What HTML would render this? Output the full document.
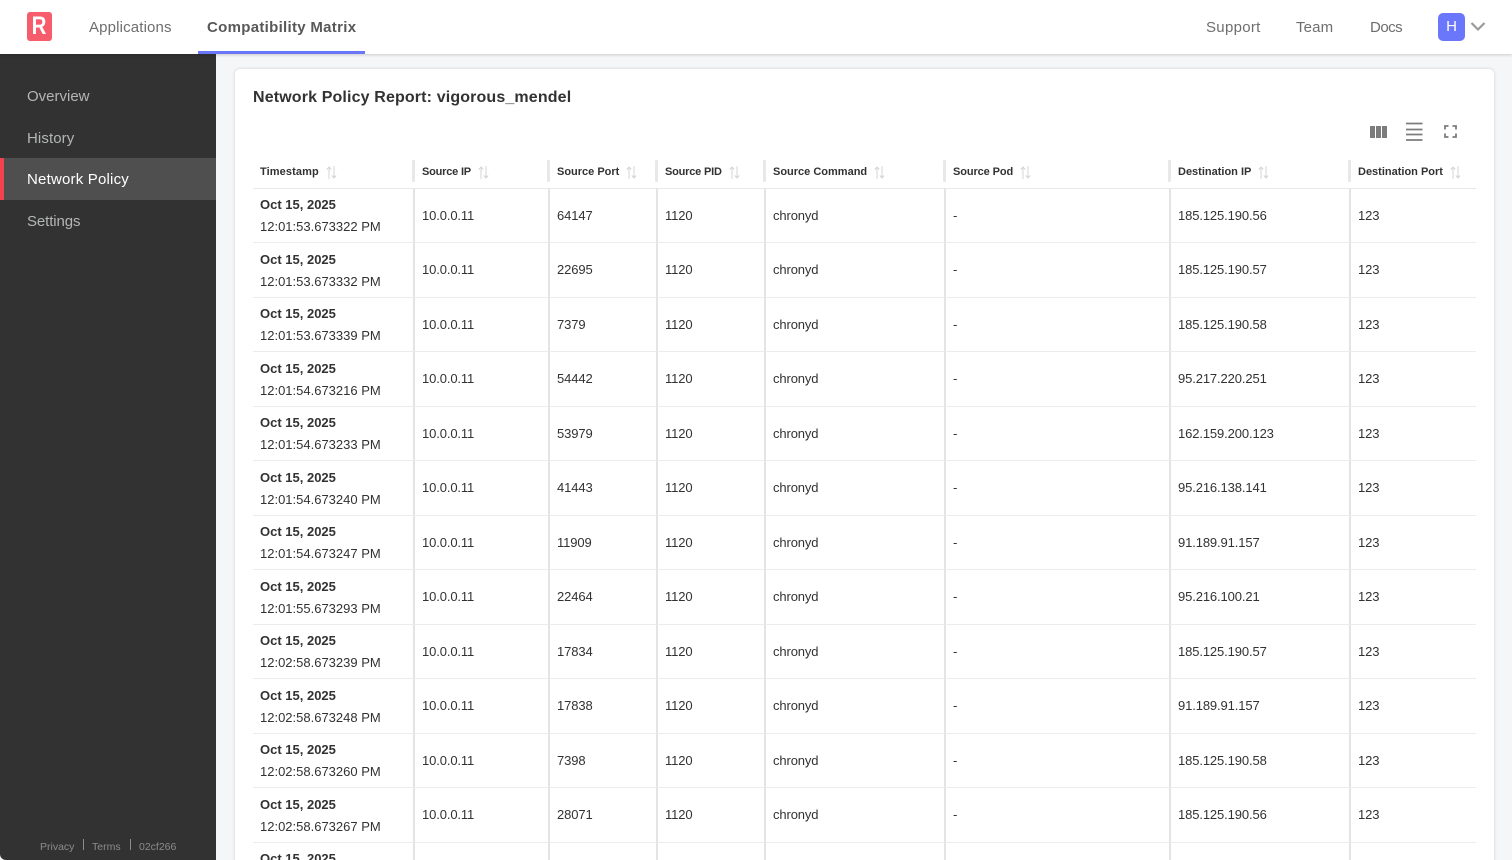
<!DOCTYPE html>
<html>
<head>
<meta charset="utf-8">
<title>Network Policy</title>
<style>
*{box-sizing:border-box}
html,body{margin:0;padding:0;width:1512px;height:860px;overflow:hidden;background:#f5f6f8;font-family:"Liberation Sans",sans-serif;color:#323232}
#root{position:relative;width:1512px;height:860px;overflow:hidden;background:#f5f6f8}
.top{position:absolute;left:0;top:0;width:1512px;height:54px;background:#fff;box-shadow:0 1px 3px rgba(0,0,0,.18);z-index:5}
.logo{position:absolute;left:27px;top:12px;width:25px;height:29px;background:#f65c6b;border-radius:3px;color:#fff;font-weight:bold;font-size:25px;line-height:29px;text-align:center}
.logo span{display:inline-block;transform:scaleX(.82)}
.n{position:absolute;top:18px;font-size:15px;line-height:20px;color:#6e6e6e;letter-spacing:.15px;white-space:nowrap}
.act{position:absolute;left:198px;top:51px;width:167px;height:3px;background:#6a77fb}
.av{position:absolute;left:1438px;top:13px;width:27px;height:28px;border-radius:5px;background:#6a77fb;color:#fff;font-size:15px;line-height:28px;text-align:center}
.side{position:absolute;left:0;top:54px;width:216px;height:806px;background:#323232;border-bottom-left-radius:6px}
.s{position:absolute;left:27px;font-size:15px;line-height:20px;color:#b3b6b5;white-space:nowrap}
.sel{position:absolute;left:0;top:104px;width:216px;height:42px;background:#4f4f4f;border-left:4px solid #f1434f}
.f{position:absolute;top:786px;font-size:10.500px;line-height:14px;color:#8c8c8c;white-space:nowrap}
.d{position:absolute;top:785px;width:1px;height:11px;background:#8c8c8c}
.card{position:absolute;left:235px;top:69px;width:1259px;height:820px;background:#fff;border-radius:5px;box-shadow:0 0 3px rgba(0,0,0,.16)}
h1{position:absolute;left:253px;top:87px;margin:0;font-size:16px;line-height:21px;font-weight:bold;color:#323232;letter-spacing:.14px;white-space:nowrap}
table{position:absolute;left:253px;top:155px;width:1223px;border-collapse:separate;border-spacing:0;table-layout:fixed;font-size:13px}
th{height:33.500px;padding:2px 0 0 7px;text-align:left;font-size:11px;font-weight:bold;color:#323232;border-bottom:1px solid #e8e8e8;position:relative;white-space:nowrap}
th:not(:first-child){padding-left:9px}
th:not(:first-child)::before{content:"";position:absolute;left:-1px;top:5px;width:3px;height:22px;background:#e8e8e8;border-radius:1px}
th svg{vertical-align:-4px;margin-left:4px}
td{height:54.500px;padding:1px 0 0 7px;border-bottom:1px solid #ececec;border-left:2px solid #e4e4e4;color:#323232;white-space:nowrap;line-height:22px;letter-spacing:-.12px}
td:first-child{border-left:0;padding:2px 0 0 7px;letter-spacing:0}
td b{display:block;font-size:13px}
svg.i{position:absolute}
</style>
</head>
<body>
<div id="root">
<div class="side">
<div class="s" style="top:33px">Overview</div>
<div class="s" style="top:75px;letter-spacing:.1px">History</div>
<div class="sel"></div>
<div class="s" style="top:116px;color:#fff;letter-spacing:.2px">Network Policy</div>
<div class="s" style="top:158px;letter-spacing:-.1px">Settings</div>
<div class="f" style="left:40px">Privacy</div><div class="d" style="left:83px"></div>
<div class="f" style="left:92px">Terms</div><div class="d" style="left:130px"></div>
<div class="f" style="left:139px">02cf266</div>
</div>
<div class="top">
<div class="logo"><span>R</span></div>
<div class="n" style="left:89px">Applications</div>
<div class="n" style="left:207px;font-weight:bold;color:#585858;letter-spacing:.3px">Compatibility Matrix</div>
<div class="act"></div>
<div class="n" style="left:1206px;letter-spacing:.3px">Support</div>
<div class="n" style="left:1296px">Team</div>
<div class="n" style="left:1370px;letter-spacing:-.5px">Docs</div>
<div class="av">H</div>
<svg class="i" style="left:1470px;top:21px" width="16" height="11" viewBox="0 0 16 11"><path d="M1.500 2 L8 8.500 L14.500 2" fill="none" stroke="#9a9a9a" stroke-width="2.200"/></svg>
</div>
<div class="card"></div>
<h1>Network Policy Report: vigorous_mendel</h1>
<svg class="i" style="left:1370px;top:126px" width="17" height="12" viewBox="0 0 17 12"><path d="M0 0h5v12H0zM6 0h5v12H6zM12 0h5v12h-5z" fill="#7c7c7c"/></svg>
<svg class="i" style="left:1405px;top:122px" width="18" height="20" viewBox="0 0 18 20"><path d="M1 1.500h16.500M1 7.500h16.500M1 12.500h16.500M1 18h16.500" stroke="#7c7c7c" stroke-width="1.800" fill="none"/></svg>
<svg class="i" style="left:1444px;top:125px" width="13" height="13" viewBox="0 0 13 13"><path d="M1 4.500V1h3.500M8.500 1H12v3.500M12 8.500V12H8.500M4.500 12H1V8.500" stroke="#7c7c7c" stroke-width="1.800" fill="none"/></svg>
<table>
<colgroup><col style="width:160px"><col style="width:135px"><col style="width:108px"><col style="width:108px"><col style="width:180px"><col style="width:225px"><col style="width:180px"><col></colgroup>
<tr>
<th style="letter-spacing:.1px">Timestamp <svg width="11" height="13" viewBox="0 0 11 13"><path d="M3 13V1M.8 3.500 3 1l2.200 2.500M8 0v12M5.800 9.500 8 12l2.200-2.500" stroke="#d4d4d4" fill="none"/></svg></th>
<th style="letter-spacing:-.2px">Source IP <svg width="11" height="13" viewBox="0 0 11 13"><path d="M3 13V1M.8 3.500 3 1l2.200 2.500M8 0v12M5.800 9.500 8 12l2.200-2.500" stroke="#d4d4d4" fill="none"/></svg></th>
<th>Source Port <svg width="11" height="13" viewBox="0 0 11 13"><path d="M3 13V1M.8 3.500 3 1l2.200 2.500M8 0v12M5.800 9.500 8 12l2.200-2.500" stroke="#d4d4d4" fill="none"/></svg></th>
<th style="letter-spacing:-.2px">Source PID <svg width="11" height="13" viewBox="0 0 11 13"><path d="M3 13V1M.8 3.500 3 1l2.200 2.500M8 0v12M5.800 9.500 8 12l2.200-2.500" stroke="#d4d4d4" fill="none"/></svg></th>
<th>Source Command <svg width="11" height="13" viewBox="0 0 11 13"><path d="M3 13V1M.8 3.500 3 1l2.200 2.500M8 0v12M5.800 9.500 8 12l2.200-2.500" stroke="#d4d4d4" fill="none"/></svg></th>
<th style="letter-spacing:-.1px">Source Pod <svg width="11" height="13" viewBox="0 0 11 13"><path d="M3 13V1M.8 3.500 3 1l2.200 2.500M8 0v12M5.800 9.500 8 12l2.200-2.500" stroke="#d4d4d4" fill="none"/></svg></th>
<th>Destination IP <svg width="11" height="13" viewBox="0 0 11 13"><path d="M3 13V1M.8 3.500 3 1l2.200 2.500M8 0v12M5.800 9.500 8 12l2.200-2.500" stroke="#d4d4d4" fill="none"/></svg></th>
<th>Destination Port <svg width="11" height="13" viewBox="0 0 11 13"><path d="M3 13V1M.8 3.500 3 1l2.200 2.500M8 0v12M5.800 9.500 8 12l2.200-2.500" stroke="#d4d4d4" fill="none"/></svg></th>
</tr>
<tr><td><b>Oct 15, 2025</b>12:01:53.673322 PM</td><td>10.0.0.11</td><td>64147</td><td>1120</td><td>chronyd</td><td>-</td><td>185.125.190.56</td><td>123</td></tr>
<tr><td><b>Oct 15, 2025</b>12:01:53.673332 PM</td><td>10.0.0.11</td><td>22695</td><td>1120</td><td>chronyd</td><td>-</td><td>185.125.190.57</td><td>123</td></tr>
<tr><td><b>Oct 15, 2025</b>12:01:53.673339 PM</td><td>10.0.0.11</td><td>7379</td><td>1120</td><td>chronyd</td><td>-</td><td>185.125.190.58</td><td>123</td></tr>
<tr><td><b>Oct 15, 2025</b>12:01:54.673216 PM</td><td>10.0.0.11</td><td>54442</td><td>1120</td><td>chronyd</td><td>-</td><td>95.217.220.251</td><td>123</td></tr>
<tr><td><b>Oct 15, 2025</b>12:01:54.673233 PM</td><td>10.0.0.11</td><td>53979</td><td>1120</td><td>chronyd</td><td>-</td><td>162.159.200.123</td><td>123</td></tr>
<tr><td><b>Oct 15, 2025</b>12:01:54.673240 PM</td><td>10.0.0.11</td><td>41443</td><td>1120</td><td>chronyd</td><td>-</td><td>95.216.138.141</td><td>123</td></tr>
<tr><td><b>Oct 15, 2025</b>12:01:54.673247 PM</td><td>10.0.0.11</td><td>11909</td><td>1120</td><td>chronyd</td><td>-</td><td>91.189.91.157</td><td>123</td></tr>
<tr><td><b>Oct 15, 2025</b>12:01:55.673293 PM</td><td>10.0.0.11</td><td>22464</td><td>1120</td><td>chronyd</td><td>-</td><td>95.216.100.21</td><td>123</td></tr>
<tr><td><b>Oct 15, 2025</b>12:02:58.673239 PM</td><td>10.0.0.11</td><td>17834</td><td>1120</td><td>chronyd</td><td>-</td><td>185.125.190.57</td><td>123</td></tr>
<tr><td><b>Oct 15, 2025</b>12:02:58.673248 PM</td><td>10.0.0.11</td><td>17838</td><td>1120</td><td>chronyd</td><td>-</td><td>91.189.91.157</td><td>123</td></tr>
<tr><td><b>Oct 15, 2025</b>12:02:58.673260 PM</td><td>10.0.0.11</td><td>7398</td><td>1120</td><td>chronyd</td><td>-</td><td>185.125.190.58</td><td>123</td></tr>
<tr><td><b>Oct 15, 2025</b>12:02:58.673267 PM</td><td>10.0.0.11</td><td>28071</td><td>1120</td><td>chronyd</td><td>-</td><td>185.125.190.56</td><td>123</td></tr>
<tr><td><b>Oct 15, 2025</b>12:02:58.673270 PM</td><td>10.0.0.11</td><td></td><td></td><td></td><td></td><td></td><td></td></tr>
</table>
</div>
</body>
</html>
